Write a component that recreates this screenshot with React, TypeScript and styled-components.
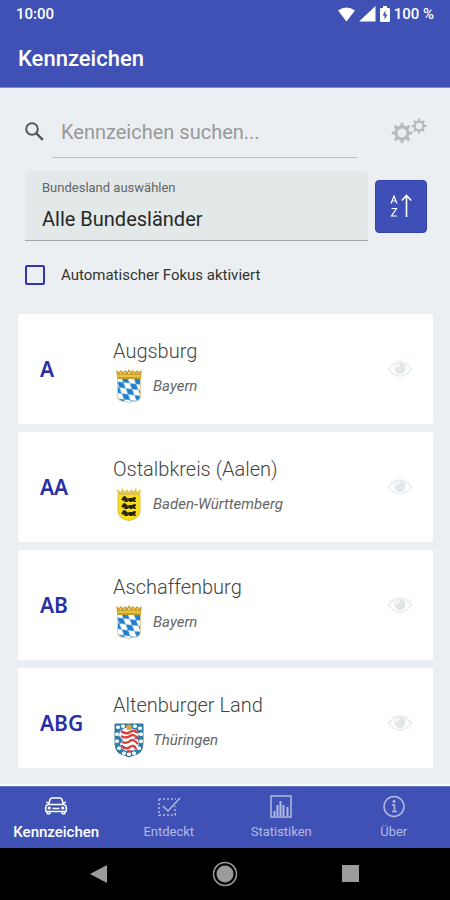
import React, { useState } from "react";
import styled, { createGlobalStyle } from "styled-components";

const GlobalStyle = createGlobalStyle`
  *, *::before, *::after { box-sizing: border-box; }
  body { margin: 0; background: #ebeff2; font-family: Roboto, "Liberation Sans", sans-serif; }
  button, input, select { font-family: inherit; }
`;

const Screen = styled.div`
  display: flex;
  flex-direction: column;
  height: 100vh;
  min-height: 480px;
  background: #ebeff2;
`;

const Header = styled.header`
  flex: none;
  background: #3f51b5;
  color: #fff;
  border-bottom: 1px solid #7f8bc4;
`;

const StatusBar = styled.div`
  display: flex;
  align-items: center;
  justify-content: space-between;
  height: 28px;
  padding: 0 16px;
  font-size: 15px;
  font-weight: 500;
`;

const StatusIcons = styled.div`
  display: flex;
  align-items: center;
  gap: 4px;
`;

const Title = styled.h1`
  margin: 0;
  padding: 17px 18px 14px;
  font-size: 22px;
  line-height: 28px;
  font-weight: 500;
`;

const Main = styled.main`
  flex: 1;
  min-height: 0;
  display: flex;
  flex-direction: column;
  padding: 24px 17px 18px 18px;
`;

const Filters = styled.form`
  flex: none;
  display: flex;
  flex-direction: column;
  padding: 0 6px 0 7px;
`;

const SearchRow = styled.div`
  display: flex;
  align-items: flex-start;
  justify-content: space-between;
`;

const SearchLabel = styled.label`
  flex: 1;
  display: flex;
  align-items: flex-start;
  gap: 8px;
  color: #555;
  svg { margin-top: 10px; }
`;

const SearchInput = styled.input`
  flex: 1;
  min-width: 0;
  height: 46px;
  margin-right: 34px;
  padding: 0 9px 6px;
  border: 0;
  border-bottom: 1px solid #bcc0c3;
  background: transparent;
  color: #222;
  font-size: 20px;
  outline: none;
  &::placeholder { color: #97999b; opacity: 1; }
`;

const PlainButton = styled.button`
  display: flex;
  padding: 0;
  border: 0;
  background: none;
  cursor: pointer;
`;

const SettingsButton = styled(PlainButton)`
  margin-top: 6px;
`;

const SelectRow = styled.div`
  display: flex;
  align-items: center;
  gap: 7px;
  margin-top: 13px;
`;

const SelectField = styled.div`
  flex: 1;
  display: flex;
  flex-direction: column;
  height: 70px;
  padding-top: 8px;
  border-bottom: 1px solid #a3a6a7;
  border-radius: 5px 5px 0 0;
  background: #e3e8e8;
`;

const SelectLabel = styled.label`
  padding: 0 17px;
  color: #626566;
  font-size: 13px;
  line-height: 18px;
`;

const Select = styled.select`
  flex: 1;
  padding: 0 17px;
  border: 0;
  appearance: none;
  background: transparent;
  color: #262828;
  font-size: 20px;
  outline: none;
`;

const SortButton = styled.button`
  display: flex;
  align-items: center;
  justify-content: center;
  width: 52px;
  height: 53px;
  padding: 0;
  border: 1px solid #3343ad;
  border-radius: 4px;
  background: #3f4fb8;
  cursor: pointer;
`;

const CheckRow = styled.label`
  display: flex;
  align-items: center;
  gap: 16px;
  margin: 23px 0 28px;
  color: #333;
  font-size: 15px;
  line-height: 22px;
`;

const Checkbox = styled.input`
  appearance: none;
  width: 20px;
  height: 20px;
  margin: 0;
  border: 2px solid #3433b0;
  border-radius: 2px;
  &:checked { background: #3433b0; box-shadow: inset 0 0 0 3px #ebeff2; }
`;

const List = styled.ul`
  flex: 1;
  min-height: 0;
  display: flex;
  flex-direction: column;
  gap: 8px;
  margin: 0;
  padding: 0;
  list-style: none;
  overflow: hidden;
`;

const Card = styled.li`
  flex: none;
  display: flex;
  align-items: center;
  height: 110px;
  padding: 0 20px 0 22px;
  border-radius: 2px;
  background: #fff;
`;

const Code = styled.div`
  width: 73px;
  color: #2a2fa6;
  font-family: "Noto Sans", sans-serif;
  font-size: 21px;
  font-weight: 600;
  line-height: 28px;
`;

const CardBody = styled.div`
  flex: 1;
  min-width: 0;
  padding-top: 4px;
`;

const District = styled.div`
  color: #444;
  font-size: 20px;
  font-weight: 300;
  line-height: 24px;
`;

const State = styled.div`
  display: flex;
  align-items: center;
  gap: 8px;
  margin-top: 5px;
  color: #666;
  font-size: 15px;
  font-style: italic;
  line-height: 36px;
`;

const TabBar = styled.nav`
  flex: none;
  display: grid;
  grid-template-columns: repeat(4, 1fr);
  height: 62px;
  border-top: 1px solid #6674c4;
  box-shadow: 0 -2px 0 #fafbfd;
  background: #3f51b5;
`;

const Tab = styled.button<{ $active: boolean }>`
  display: flex;
  flex-direction: column;
  align-items: center;
  gap: 3px;
  padding: 6px 0 0;
  border: 0;
  background: none;
  color: ${(p) => (p.$active ? "#fff" : "#b3bae2")};
  font-size: ${(p) => (p.$active ? 15 : 13)}px;
  font-weight: ${(p) => (p.$active ? 500 : 400)};
  line-height: 20px;
  white-space: nowrap;
  cursor: pointer;
`;

const SystemBar = styled.div`
  flex: none;
  display: flex;
  align-items: center;
  justify-content: space-between;
  height: 52px;
  padding: 0 89px;
  background: #000;
`;

const WifiIcon = () => (
  <svg width="17" height="15" viewBox="0 0 17 15" fill="#fff" aria-hidden="true">
    <path d="M0 3.6Q8.5-2.6 17 3.6L8.5 14.5z" />
  </svg>
);
const SignalIcon = () => (
  <svg width="17" height="16" viewBox="0 0 17 16" fill="#fff" aria-hidden="true">
    <path d="M16.5 0v15.5H0z" />
  </svg>
);
const BatteryIcon = () => (
  <svg width="10" height="16" viewBox="0 0 10 16" aria-hidden="true">
    <path fill="#fff" d="M3 0h4v2h2q1 0 1 1v12q0 1-1 1H1q-1 0-1-1V3q0-1 1-1h2z" />
    <path fill="#3f51b5" d="M5.6 4.5 2.5 9.5h2v4l3-5h-2z" />
  </svg>
);
const SearchIcon = () => (
  <svg width="19" height="19" viewBox="0 0 19 19" fill="none" stroke="#555" strokeWidth="2" aria-hidden="true">
    <circle cx="7" cy="7" r="5.8" />
    <path d="m11.3 11.3 6.6 6.6" strokeWidth="2.4" />
  </svg>
);

const teeth = [0, 45, 90, 135, 180, 225, 270, 315];
const Gear = ({ x, y, scale }: { x: number; y: number; scale: number }) => (
  <g transform={`translate(${x} ${y}) scale(${scale})`}>
    <circle r="6" fill="none" stroke="#b7b9bb" strokeWidth="3" />
    {teeth.map((a) => (
      <path key={a} d="M-1.8-6.5-1.2-10.3H1.2L1.8-6.5z" fill="#b7b9bb" transform={`rotate(${a})`} />
    ))}
  </g>
);
const GearsIcon = () => (
  <svg width="36" height="26" viewBox="0 0 36 26" aria-hidden="true">
    <Gear x={11} y={15} scale={1} />
    <Gear x={28} y={8} scale={0.73} />
  </svg>
);

const SortIcon = () => (
  <svg width="24" height="26" viewBox="0 0 24 26" fill="none" stroke="#fff" aria-hidden="true">
    <path d="M2 10.5 5 3l3 7.500M3 8h4M2.500 15.500h5L2.500 23h5.500" strokeWidth="1.2" />
    <path d="M17.500 24V3M12.800 7.500l4.700-5 4.700 5" strokeWidth="1.600" />
  </svg>
);

const EyeIcon = () => (
  <svg width="26" height="18" viewBox="0 0 26 18" aria-hidden="true">
    <path d="M1.5 9Q7 2 13 2t11.5 7Q19 16 13 16T1.5 9z" fill="none" stroke="#eceff2" strokeWidth="1.8" />
    <circle cx="13" cy="8.5" r="5.5" fill="#e1e6e9" />
    <path d="M9.5 8.5q0-3.5 3.5-3.5" fill="none" stroke="#fff" strokeWidth="1.4" />
  </svg>
);

const CRESTS = {
  Bayern: (
    <svg width="32" height="36" viewBox="0 0 32 36" aria-hidden="true">
      <defs>
        <pattern id="bavaria-lozenges" width="11" height="6.500" patternUnits="userSpaceOnUse" patternTransform="translate(6 11) rotate(38)">
          <path fill="#fff" d="M0 0h11v6.500H0z" />
          <path fill="#2080cb" d="M0 3.250 5.500 0 11 3.250 5.500 6.500z" />
        </pattern>
      </defs>
      <path fill="#d9cda7" d="M4 9h24v19q0 5-6 6h-3l-3 1.500L13 34h-3q-6-1-6-6z" />
      <path fill="url(#bavaria-lozenges)" d="M5 10h22v18q0 4-5 5h-3l-3 1.500L13 33h-3q-5-1-5-5z" />
      <path fill="#cda22f" d="M4 8 3 2l3 2 1.500-2L10 4l2.500-2L14 4l2-3 2 3 1.500-2L22 4l2.500-2L26 4l3-2-1 6v3H4z" />
      <path d="M5 8h22" stroke="#f0cb55" strokeWidth="1.500" />
      <path d="M6 10h20" stroke="#b98a22" strokeDasharray="2 2" />
      <path d="M7 5h1m3 0h1m3 0h2m3 0h1m3 0h1" stroke="#fff" />
    </svg>
  ),
  "Baden-Württemberg": (
    <svg width="32" height="36" viewBox="0 0 32 36" aria-hidden="true">
      <path fill="#e2c54f" d="M5 9 4 3l4 3 1-4 3 4 1.500-3L16 6l2.500-3L20 6l3-4 1 4 4-3-1 6z" />
      <path fill="#f6df18" stroke="#d8c243" d="M5 8.500h22V24q0 9-11 10.500Q5 33 5 24z" />
      {[10, 17, 24].map((y) => (
        <g key={y} transform={`translate(8 ${y})`} fill="#25210a">
          <path d="M1 1 4 0l2 2h5l2-1 2 1-1 2 1 2h-2l-1-1-1 1H9L8 5 6 6H3l1-2-2 1-2-2 2-1z" />
          <path d="m12 3 3-2v1l-2 2z" />
          <path d="M6 3h2" stroke="#ae9317" />
        </g>
      ))}
    </svg>
  ),
  Thüringen: (
    <svg width="32" height="36" viewBox="0 0 32 36" aria-hidden="true">
      <path fill="#2f7fae" stroke="#3e708c" d="M2 2h28v18q0 10-6 12-4 1-8 3-4-2-8-3-6-2-6-12z" />
      <path fill="#fff" d="M7 9q5-4 9-3l8 2 2 4-2 3 2 6-2 6-8 3-7-3-2-5 3-4-4-4z" />
      <g fill="none" stroke="#d44441" strokeWidth="2.400">
        <path d="M8 9q5 4 9 1t8 1M8 14q5 3 9 0t8 3M9 20q5 2 8-1t8 3M8 24q5 4 9 1t6 2M14 29q3 1 5 0" />
      </g>
      <path d="M13 4q3-3 6 0l-1 4h-4z" fill="#d8a83d" />
      <g fill="#eef9fd">
        {[[5, 5], [10, 4], [22, 4], [27, 6], [4, 12], [28, 12], [4, 19], [28, 19], [6, 26], [26, 26], [11, 31], [16, 32], [21, 31]].map(([x, y]) => (
          <path key={`${x}-${y}`} d={`M${x} ${y - 2}l1 1h1v2l-1 1h-2l-1-1v-2h1z`} />
        ))}
      </g>
      <path d="m22 11 3-3m-4 9 4-2m-13 10-4-2" stroke="#555f9c" />
    </svg>
  ),
};

const CarIcon = () => (
  <svg width="24" height="26" viewBox="0 0 24 26" fill="none" stroke="currentColor" strokeWidth="1.600" strokeLinejoin="round" aria-hidden="true">
    <path d="M4.500 11.500 6 6.500Q6.500 5 8 5h8q1.500 0 2 1.500l1.500 5M4 11.500h16q2.300.8 2.300 3v3q0 1-1 1H2.700q-1 0-1-1v-3q0-2.200 2.300-3z" />
    <path d="M3 18.500v1q0 1.500 1.500 1.500T6 19.500v-1m12 0v1q0 1.500 1.500 1.500t1.500-1.500v-1M8.500 15.500h7M2 9.500h2m16 0h2" />
    <circle cx="5.200" cy="15" r=".8" /><circle cx="18.800" cy="15" r=".8" />
  </svg>
);
const CheckBoxIcon = () => (
  <svg width="24" height="26" viewBox="0 0 24 26" fill="none" stroke="currentColor" strokeWidth="1.500" aria-hidden="true">
    <path d="M2 6h17M2 6v17M2 22h17M18 22V13" strokeDasharray="2 2" />
    <path d="m6 13 5 5L23 5" />
  </svg>
);
const ChartIcon = () => (
  <svg width="24" height="26" viewBox="0 0 24 26" fill="none" stroke="currentColor" aria-hidden="true">
    <path d="M2 3h20v21H2z" strokeWidth="1.500" />
    <path d="M5.500 23v-5m3 5V12m3 11V8m3 15V12m4 11v-9" strokeWidth="2" />
  </svg>
);
const InfoIcon = () => (
  <svg width="24" height="26" viewBox="0 0 24 26" fill="none" stroke="currentColor" strokeWidth="1.500" aria-hidden="true">
    <circle cx="12" cy="13.500" r="10" />
    <path d="M10 12h2.500v6M10 18.500h5" /><circle cx="12" cy="8.500" r=".7" fill="currentColor" />
  </svg>
);

const plates: { code: string; district: string; state: keyof typeof CRESTS }[] = [
  { code: "A", district: "Augsburg", state: "Bayern" },
  { code: "AA", district: "Ostalbkreis (Aalen)", state: "Baden-Württemberg" },
  { code: "AB", district: "Aschaffenburg", state: "Bayern" },
  { code: "ABG", district: "Altenburger Land", state: "Thüringen" },
];

const tabs = [
  { label: "Kennzeichen", Icon: CarIcon },
  { label: "Entdeckt", Icon: CheckBoxIcon },
  { label: "Statistiken", Icon: ChartIcon },
  { label: "Über", Icon: InfoIcon },
];

export default function App() {
  const [tab, setTab] = useState("Kennzeichen");
  return (
    <>
      <GlobalStyle />
      <Screen>
        <Header>
          <StatusBar>
            <span>10:00</span>
            <StatusIcons>
              <WifiIcon />
              <SignalIcon />
              <BatteryIcon />
              <span>100 %</span>
            </StatusIcons>
          </StatusBar>
          <Title>Kennzeichen</Title>
        </Header>
        <Main>
          <Filters onSubmit={(e) => e.preventDefault()}>
            <SearchRow>
              <SearchLabel>
                <SearchIcon />
                <SearchInput type="text" aria-label="Kennzeichen suchen" placeholder="Kennzeichen suchen..." />
              </SearchLabel>
              <SettingsButton type="button" aria-label="Einstellungen"><GearsIcon /></SettingsButton>
            </SearchRow>
            <SelectRow>
              <SelectField>
                <SelectLabel htmlFor="state">Bundesland auswählen</SelectLabel>
                <Select id="state">
                  <option>Alle Bundesländer</option>
                  <option>Baden-Württemberg</option>
                  <option>Bayern</option>
                  <option>Thüringen</option>
                </Select>
              </SelectField>
              <SortButton type="button" aria-label="Sortierung"><SortIcon /></SortButton>
            </SelectRow>
            <CheckRow>
              <Checkbox type="checkbox" />
              Automatischer Fokus aktiviert
            </CheckRow>
          </Filters>
          <List>
            {plates.map((p) => (
              <Card key={p.code}>
                <Code>{p.code}</Code>
                <CardBody>
                  <District>{p.district}</District>
                  <State>{CRESTS[p.state]}{p.state}</State>
                </CardBody>
                <PlainButton type="button" aria-label={`${p.district} entdeckt`}><EyeIcon /></PlainButton>
              </Card>
            ))}
          </List>
        </Main>
        <TabBar>
          {tabs.map(({ label, Icon }) => (
            <Tab key={label} type="button" $active={tab === label} onClick={() => setTab(label)}>
              <Icon />
              {label}
            </Tab>
          ))}
        </TabBar>
        <SystemBar>
          <PlainButton type="button" aria-label="Zurück">
            <svg width="20" height="20" viewBox="0 0 20 20" aria-hidden="true"><path d="M18 1v18L1 10z" fill="#9b9b9b" /></svg>
          </PlainButton>
          <PlainButton type="button" aria-label="Startbildschirm">
            <svg width="26" height="26" viewBox="0 0 26 26" aria-hidden="true">
              <circle cx="13" cy="13" r="11.500" fill="none" stroke="#9b9b9b" strokeWidth="1.500" />
              <circle cx="13" cy="13" r="8.500" fill="#9b9b9b" />
            </svg>
          </PlainButton>
          <PlainButton type="button" aria-label="Letzte Apps">
            <svg width="20" height="20" viewBox="0 0 20 20" aria-hidden="true"><path d="M1 1h17v17H1z" fill="#9b9b9b" /></svg>
          </PlainButton>
        </SystemBar>
      </Screen>
    </>
  );
}
